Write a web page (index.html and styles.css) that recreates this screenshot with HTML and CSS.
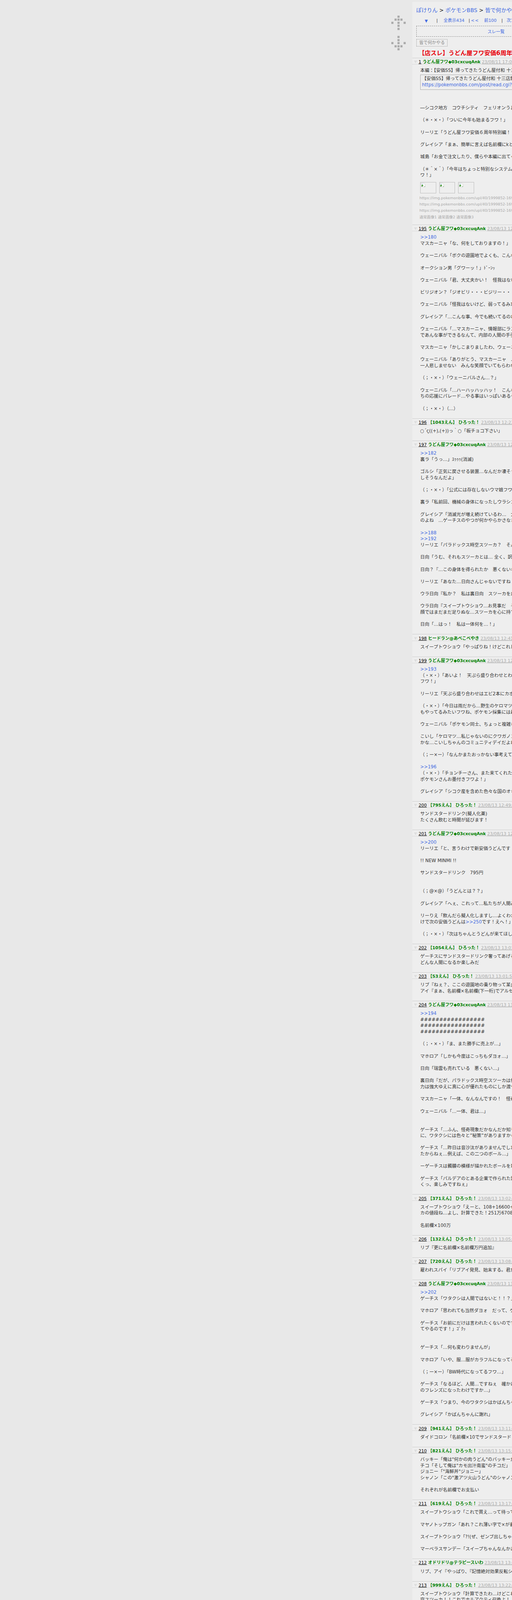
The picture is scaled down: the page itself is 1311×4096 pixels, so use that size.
FILE: index.html
```html
<!DOCTYPE html>
<html lang="ja">
<head>
<meta charset="utf-8">
<title>【店スレ】うどん屋フワ安価6周年</title>
<link rel="stylesheet" href="styles.css">
</head>
<body>
<aside class="side">
<svg class="arrows" width="54" height="130" viewBox="0 0 54 130" fill="#aaa">
<rect x="23" y="0" width="8" height="8"/><rect x="12" y="11" width="8" height="8"/><rect x="23" y="11" width="8" height="8"/><rect x="34" y="11" width="8" height="8"/><rect x="0" y="23" width="8" height="8"/><rect x="23" y="23" width="8" height="8"/><rect x="46" y="23" width="8" height="8"/><rect x="23" y="34" width="8" height="8"/><rect x="23" y="46" width="8" height="8"/>
<rect x="23" y="76" width="8" height="8"/><rect x="23" y="88" width="8" height="8"/><rect x="0" y="99" width="8" height="8"/><rect x="23" y="99" width="8" height="8"/><rect x="46" y="99" width="8" height="8"/><rect x="12" y="111" width="8" height="8"/><rect x="23" y="111" width="8" height="8"/><rect x="34" y="111" width="8" height="8"/><rect x="23" y="122" width="8" height="8"/>
</svg>
</aside>
<main class="panel">
<div class="top">
<div class="crumb"><a>ぽけりん</a> &gt; <a>ポケモンBBS</a> &gt; <a>皆で何かやる</a></div>
<div class="nav">
<a class="nav-c1 tri">▼</a><span class="sep">|</span><a class="nav-c2">全表示434</a><span class="sep">|</span><a class="nav-c3">&lt;&lt;</a><a class="nav-c4">前100</a><span class="sep">|</span><a class="nav-c5">次100</a>
</div>
<div class="list"><a>スレ一覧</a></div>
<div class="board">皆で何かやる</div>
<h1 class="title">【店スレ】うどん屋フワ安価6周年記念</h1>
</div>

<section class="res">
<div class="head"><i class="fold"></i><a class="no">1</a> <b class="name">うどん屋フワ◆03cxcuqAnk</b> <a class="date">23/08/11 17:02:00</a></div>
<div class="text">本編：【安価SS】帰ってきたうどん屋付和 十三店舗目
<blockquote class="quote">【安価SS】帰ってきたうどん屋付和 十三店舗目<br><a>https://pokemonbbs.com/post/read.cgi?bbs=all</a></blockquote>
<br><br>―シコク地方　コウチシティ　フェリオンうどん屋<br><br>（＊・×・）「ついに今年も始まるフワ！」<br><br>リーリエ「うどん屋フワ安価６周年特別編！ です<br><br>グレイシア「まぁ、簡単に言えば名前欄にkとか<br><br>城島「お金で注文したり、僕らや本編に出てくる<br><br>（＊＾×＾）「今年はちょっと特別なシステムで<br>ワ！」</div>
<div class="thumbs"><span class="thumb"><svg width="16" height="16" viewBox="0 0 16 16"><path d="M1 1h10l4 4v10H1z" fill="#fff" stroke="#bbb"/><path d="M2 9l3-3 4 4-3 4H2z" fill="#4a9a3a"/><path d="M3 3h6v3H3z" fill="#cfe0f5"/><path d="M12 15l3-3v3z" fill="#4a9a3a"/></svg></span><span class="thumb"><svg width="16" height="16" viewBox="0 0 16 16"><path d="M1 1h10l4 4v10H1z" fill="#fff" stroke="#bbb"/><path d="M2 9l3-3 4 4-3 4H2z" fill="#4a9a3a"/><path d="M3 3h6v3H3z" fill="#cfe0f5"/><path d="M12 15l3-3v3z" fill="#4a9a3a"/></svg></span><span class="thumb"><svg width="16" height="16" viewBox="0 0 16 16"><path d="M1 1h10l4 4v10H1z" fill="#fff" stroke="#bbb"/><path d="M2 9l3-3 4 4-3 4H2z" fill="#4a9a3a"/><path d="M3 3h6v3H3z" fill="#cfe0f5"/><path d="M12 15l3-3v3z" fill="#4a9a3a"/></svg></span></div>
<div class="files">https://img.pokemonbbs.com/upl/40/1999852-1691<br>https://img.pokemonbbs.com/upl/40/1999852-1691<br>https://img.pokemonbbs.com/upl/40/1999852-1691<br>通常画像1 通常画像2 通常画像3</div>
</section>

<section class="res">
<div class="head"><i class="fold"></i><a class="no">195</a> <b class="name">うどん屋フワ◆03cxcuqAnk</b> <a class="date">23/08/13 12:20:00</a></div>
<div class="text"><a class="anc">&gt;&gt;180</a><br>マスカーニャ「な、何をしておりますの！」<br><br>ウェーニバル「ボクの遊園地でよくも、こんな事を<br><br>オークション男「グワーッ！」ﾄﾞｰﾝｯ<br><br>ウェーニバル「君、大丈夫かい！　怪我はないか<br><br>ビリジオン？「ジオビリ・・・ビジリー・・・<br><br>ウェーニバル「怪我はないけど、弱ってるみたい<br><br>グレイシア「…こんな事、今でも続いてるのね<br><br>ウェーニバル「…マスカーニャ、情報部にランク<br>であんな事ができるなんて、内部の人間の手引き<br><br>マスカーニャ「かしこまりましたわ、ウェーニバ<br><br>ウェーニバル「ありがとう、マスカーニャ　…誰<br>一人悲しませない　みんな笑顔でいてもらわない<br><br>（；・×・）「ウェーニバルさん…？」<br><br>ウェーニバル「…ハーハッハッハッ！　こんな事<br>ちの応援にパレード…やる事はいっぱいあるぞ<br><br>（；・×・）（…）</div>
</section>

<section class="res">
<div class="head"><i class="fold"></i><a class="no">196</a> <b class="name">【1043えん】 ひろった！</b> <a class="date">23/08/13 12:23:00</a></div>
<div class="text">○´ς((+),(+))っ｀○「板チョコ下さい」</div>
</section>

<section class="res">
<div class="head"><i class="fold"></i><a class="no">197</a> <b class="name">うどん屋フワ◆03cxcuqAnk</b> <a class="date">23/08/13 12:30:00</a></div>
<div class="text"><a class="anc">&gt;&gt;182</a><br>裏ラ「うっ…」ｽｩｩｩ(消滅)<br><br>ゴルシ「正気に戻させる装置…なんだか凄そうだ<br>しそうなんだよ」<br><br>（；・×・）「公式には存在しないウマ娘フワ<br><br>裏ラ「私前回、機械の身体になったしウラシコ<br><br>グレイシア「消滅光が増え続けているわ…　大変<br>のよね　…ゲーチスのやつが何かやらかさなきゃ<br><br><a class="anc">&gt;&gt;188</a><br><a class="anc">&gt;&gt;192</a><br>リーリエ「パラドックス時空スツーカ？　そんな<br><br>日向「うむ、それもスツーカとは… 全く、訳が<br><br>日向？『…この身体を得られたか　悪くないな<br><br>リーリエ「あなた…日向さんじゃないですね<br><br>ウラ日向『私か？　私は裏日向　スツーカを広め<br><br>ウラ日向『スイープトウショウ…お見事だ　そ<br>顔ではまだまだ足りぬな…スツーカを心に持て<br><br>日向「…はっ！　私は一体何を…！」</div>
</section>

<section class="res">
<div class="head"><i class="fold"></i><a class="no">198</a> <b class="name">ヒードラン@あべこべやき</b> <a class="date">23/08/13 12:41:00</a></div>
<div class="text">スイープトウショウ「やっぱりね！けどこれじゃ</div>
</section>

<section class="res">
<div class="head"><i class="fold"></i><a class="no">199</a> <b class="name">うどん屋フワ◆03cxcuqAnk</b> <a class="date">23/08/13 12:45:00</a></div>
<div class="text"><a class="anc">&gt;&gt;193</a><br>（・×・）「あいよ！　天ぷら盛り合わせとわかめ<br>フワ！」<br><br>リーリエ「天ぷら盛り合わせはエビ2本にカボチャ<br><br>（・×・）「今日は雨だから…野生のケロマツが<br>もやってるみたいフワね、ポケモン採集には最適<br><br>ウェーニバル「ポケモン同士、ちょっと複雑な<br><br>こいし「ケロマツ…私じゃないのにクワガノン<br>かな…こいしちゃんのコミュニティデイだよね<br><br>（；ー×ー）「なんかまたおっかない事考えてる<br><br><a class="anc">&gt;&gt;196</a><br>（・×・）「チョンチーさん、また来てくれたフ<br>ポケモンさんお墨付きフワよ！」<br><br>グレイシア「シコク産を含めた色々な国のオキ</div>
</section>

<section class="res">
<div class="head"><i class="fold"></i><a class="no">200</a> <b class="name">【795えん】 ひろった！</b> <a class="date">23/08/13 12:49:00</a></div>
<div class="text">サンドスタードリンク(擬人化薬)<br>たくさん飲むと時間が延びます！</div>
</section>

<section class="res">
<div class="head"><i class="fold"></i><a class="no">201</a> <b class="name">うどん屋フワ◆03cxcuqAnk</b> <a class="date">23/08/13 12:55:00</a></div>
<div class="text"><a class="anc">&gt;&gt;200</a><br>リーリエ「と、言うわけで新安価うどんです！」<br><br>!! NEW MINMI !!<br><br>サンドスタードリンク　795円<br><br><br>（；@×@）「うどんとは？？」<br><br>グレイシア「へぇ、これって…私たちが人間み<br><br>リーりえ「飲んだら擬人化しますし…よくわから<br>けで次の安価うどんは<a class="anc">&gt;&gt;250</a>です！えへ！」<br><br>（；・×・）「次はちゃんとうどんが来てほしい</div>
</section>

<section class="res">
<div class="head"><i class="fold"></i><a class="no">202</a> <b class="name">【1054えん】 ひろった！</b> <a class="date">23/08/13 13:01:00</a></div>
<div class="text">ゲーチスにサンドスタードリンク奢ってあげる<br>どんな人間になるか楽しみだ</div>
</section>

<section class="res">
<div class="head"><i class="fold"></i><a class="no">203</a> <b class="name">【53えん】 ひろった！</b> <a class="date">23/08/13 13:01:54</a></div>
<div class="text">リブ『ねぇ？、ここの遊園地の乗り物って某企業<br>アイ『まぁ、名前欄×名前欄(下一桁)でアルセウス</div>
</section>

<section class="res">
<div class="head"><i class="fold"></i><a class="no">204</a> <b class="name">うどん屋フワ◆03cxcuqAnk</b> <a class="date">23/08/13 13:02:00</a></div>
<div class="text"><a class="anc">&gt;&gt;194</a><br>#################<br>#################<br>#################<br><br>（；・×・）「ま、また勝手に売上が…」<br><br>マホロア「しかも今度はこっちもダヨォ…」<br><br>日向「瑞雲も売れている　悪くない…」<br><br>裏日向『だが、パラドックス時空スツーカは何か<br>力は強大ゆえに真に心が優れたものにしか渡せぬ<br><br>マスカーニャ「一体、なんなんですの！　怪奇な<br><br>ウェーニバル「…一体、君は…」<br><br><br>ゲーチス「…ふん、怪奇現象だかなんだか知りま<br>に、ワタクシには色々と”秘策”がありますからね<br><br>ゲーチス「…昨日は音沙汰がありませんでしたが<br>たからねぇ…例えば、この二つのボール…」<br><br>ーゲーチスは髑髏の模様が描かれたボールを取り<br><br>ゲーチス「パルデアのとある企業で作られた試作<br>くっ、楽しみですねぇ」</div>
</section>

<section class="res">
<div class="head"><i class="fold"></i><a class="no">205</a> <b class="name">【371えん】 ひろった！</b> <a class="date">23/08/13 13:02:20</a></div>
<div class="text">スイープトウショウ「えーと、108+16600+2<br>カの値段ね…よし、計算できた！251万6708円<br><br>名前欄×100万</div>
</section>

<section class="res">
<div class="head"><i class="fold"></i><a class="no">206</a> <b class="name">【132えん】 ひろった！</b> <a class="date">23/08/13 13:05:50</a></div>
<div class="text">リブ『更に名前欄×名前欄万円追加』</div>
</section>

<section class="res">
<div class="head"><i class="fold"></i><a class="no">207</a> <b class="name">【720えん】 ひろった！</b> <a class="date">23/08/13 13:08:30</a></div>
<div class="text">雇われスパイ「リブアイ発見、始末する。君だけ</div>
</section>

<section class="res">
<div class="head"><i class="fold"></i><a class="no">208</a> <b class="name">うどん屋フワ◆03cxcuqAnk</b> <a class="date">23/08/13 13:10:00</a></div>
<div class="text"><a class="anc">&gt;&gt;202</a><br>ゲーチス「ワタクシは人間ではないと！！？」<br><br>マホロア「思われても当然ダヨォ　だって、ゲー<br><br>ゲーチス「お前にだけは言われたくないのですが<br>てやるのです！」ｺﾞｸｯ<br><br><br>ゲーチス「…何も変わりませんが」<br><br>マホロア「いや、服…服がカラフルになってるよ<br><br>（；ー×ー）「BW時代になってるフワ…」<br><br>ゲーチス「なるほど、人間…ですねぇ　確かに<br>のフレンズになったわけですか…」<br><br>ゲーチス「つまり、今のワタクシはかばんちゃん<br><br>グレイシア「かばんちゃんに謝れ」</div>
</section>

<section class="res">
<div class="head"><i class="fold"></i><a class="no">209</a> <b class="name">【941えん】 ひろった！</b> <a class="date">23/08/13 13:11:30</a></div>
<div class="text">ダイドコロン「名前欄×10でサンドスタードリンク</div>
</section>

<section class="res">
<div class="head"><i class="fold"></i><a class="no">210</a> <b class="name">【821えん】 ひろった！</b> <a class="date">23/08/13 13:15:50</a></div>
<div class="text">バッキー「俺は"何かの肉うどん"のバッキーだ<br>チコ「そして俺は"カモ出汁南蛮"のチコだ」<br>ジョニー「"海鮮丼"ジョニー」<br>シャノン「この"激アツ火山うどん"のシャノン<br><br>それぞれが名前欄でお支払い</div>
</section>

<section class="res">
<div class="head"><i class="fold"></i><a class="no">211</a> <b class="name">【619えん】 ひろった！</b> <a class="date">23/08/13 13:17:50</a></div>
<div class="text">スイープトウショウ「これで買え…って待って<br><br>マヤノトップガン「あれ？これ薄い字で×が書い<br><br>スイープトウショウ「?!(ぜ、ゼンブ出しちゃっ<br><br>マーベラスサンデー「スイープちゃんなんかあっ</div>
</section>

<section class="res">
<div class="head"><i class="fold"></i><a class="no">212</a> <b class="name">オドリドリ@テラピースいわ</b> <a class="date">23/08/13 13:20:00</a></div>
<div class="text">リブ、アイ『やっぱり、『記憶絶対効果反転シス</div>
</section>

<section class="res">
<div class="head"><i class="fold"></i><a class="no">213</a> <b class="name">【999えん】 ひろった！</b> <a class="date">23/08/13 13:22:00</a></div>
<div class="text">スイープトウショウ「計算できたわ…けどこれで<br>空スツーカ！！これでホルアクティ召喚よ！！</div>
</section>
</main>
</body>
</html>
```
FILE: styles.css
```css
html {
  height: 100%;
  overflow: hidden;
  background: #e8e8e8;
}
body {
  zoom: 0.6828;
  margin: 0;
  display: flex;
  align-items: flex-start;
  width: 2400px;
  font-family: "DejaVu Sans", "Noto Sans CJK JP", sans-serif;
  font-size: 17px;
  color: #333;
  background: #e8e8e8;
}
a { color: #4169e1; }
.side {
  flex: none;
  box-sizing: border-box;
  width: 1546px;
  padding: 59px 0 0 1468px;
}
.arrows { display: block; }
.panel {
  flex: none;
  width: 640px;
  margin-top: 8px;
  background: #eeeeee;
}
.top { padding: 16px 0 0 15px; }
.crumb {
  height: 30px;
  font-size: 20px;
  line-height: 30px;
  color: #111;
  white-space: nowrap;
}
.nav {
  display: flex;
  align-items: center;
  height: 24px;
  margin-top: 12px;
  font-size: 16px;
  line-height: 24px;
  white-space: nowrap;
}
.nav a { text-align: center; }
.sep { color: #333; width: 6px; text-align: center; }
.nav-c1 { width: 75px; }
.nav-c2 { width: 109px; padding-left: 6px; }
.nav-c3 { width: 32px; padding-left: 3px; letter-spacing: 2px; text-align: left !important; }
.nav-c4 { width: 82px; }
.nav-c5 { width: 110px; padding-left: 14px; text-align: left !important; }
.tri { font-size: 15px; }
.list {
  display: flex;
  align-items: center;
  justify-content: center;
  box-sizing: border-box;
  width: 598px;
  height: 42px;
  margin-top: 6px;
  border: 1px dashed #888;
  font-size: 16px;
}
.board {
  box-sizing: border-box;
  width: 118px;
  height: 27px;
  margin-top: 9px;
  border: 1px dotted #888;
  font-size: 16px;
  line-height: 25px;
  text-align: center;
  color: #888;
}
.title {
  height: 31.5px;
  margin: 11px 0 0;
  padding-left: 9px;
  font-size: 22.4px;
  line-height: 32px;
  font-weight: bold;
  color: #e8000b;
  white-space: nowrap;
}
.res {
  border-top: 1px solid #ccc;
  padding-bottom: 24px;
}
.head {
  box-sizing: content-box;
  height: 16px;
  margin-left: -1px;
  padding: 6px 0 0 7px;
  border-bottom: 1px solid #d8d8d8;
  font-size: 16px;
  line-height: 18px;
  white-space: nowrap;
}
.fold {
  display: inline-block;
  width: 0;
  height: 0;
  margin-right: 6px;
  border-top: 11px solid #ddd;
  border-left: 6.5px solid transparent;
  border-right: 6.5px solid transparent;
}
.no { color: #000; text-decoration: underline; }
.name { color: #008000; font-weight: bold; }
.date { color: #aaa; text-decoration: underline; }
.text {
  margin: 12px 0 0 30px;
  line-height: 22.92px;
  white-space: nowrap;
}
.quote {
  box-sizing: border-box;
  width: 600px;
  height: 57px;
  margin: 3px 0 12px;
  padding: 4px 5px;
  border: 1px solid #aaa;
}
.thumbs {
  display: flex;
  gap: 11px;
  margin: 14px 0 0 30px;
}
.thumb {
  box-sizing: border-box;
  display: block;
  width: 60px;
  height: 42px;
  padding: 1px;
  border: 1px solid #bbb;
}
.thumb svg { display: block; }
.files {
  margin: 5px 0 -8px 27px;
  font-size: 14px;
  line-height: 24px;
  color: #aaa;
  white-space: nowrap;
}
```
